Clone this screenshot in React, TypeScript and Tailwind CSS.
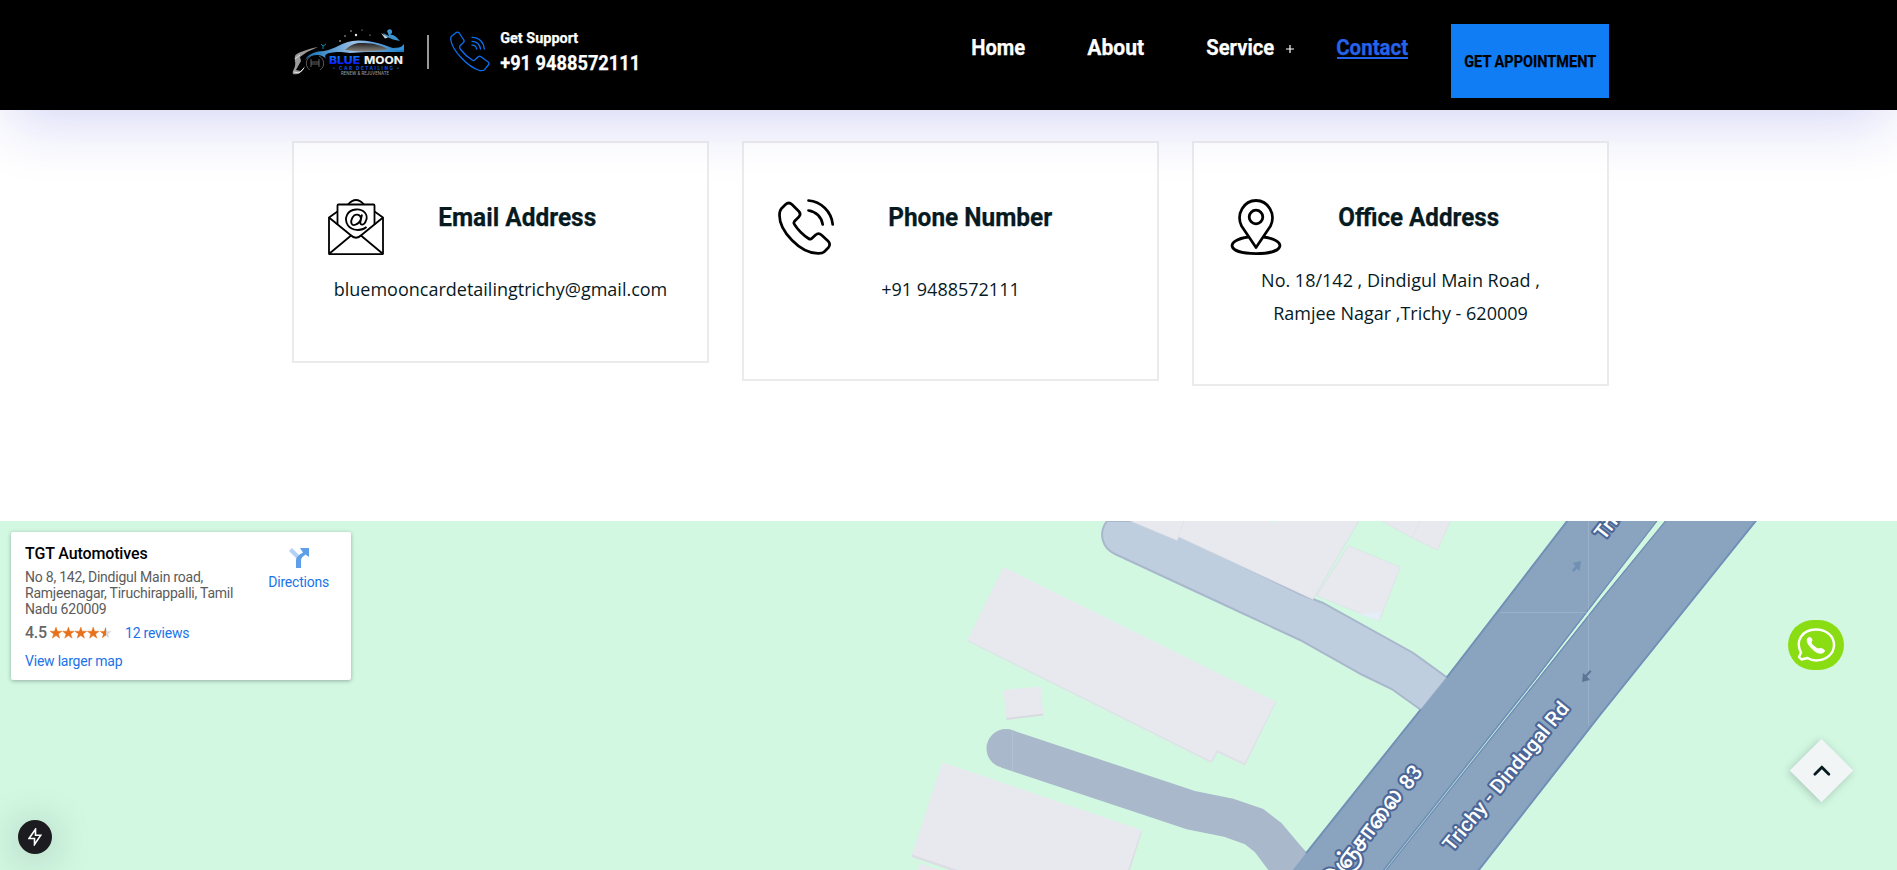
import React from "react";

const rj = "font-['Roboto',sans-serif] font-bold";

function Fit({ w, size, children, className = "" }: { w: number; size: number; children: string; className?: string }) {
  return (
    <svg width={w} height={size * 1.2} className={`block overflow-visible ${className}`} fill="currentColor" stroke="currentColor" strokeWidth=".25">
      <text x="-0.8" y={size * 0.95} fontSize={size} textLength={w + 1} lengthAdjust="spacingAndGlyphs">
        {children}
      </text>
    </svg>
  );
}

function Logo() {
  return (
    <svg width="114" height="50" viewBox="0 0 114 50" className="block">
      <defs>
        <linearGradient id="body" x1="0" x2="1">
          <stop offset="0" stopColor="#0b6fb8" />
          <stop offset="0.5" stopColor="#9cc0e6" />
          <stop offset="1" stopColor="#1679c4" />
        </linearGradient>
        <linearGradient id="glass" x1="0" x2="0" y1="0" y2="1">
          <stop offset="0" stopColor="#222" />
          <stop offset="1" stopColor="#8a8580" />
        </linearGradient>
        <linearGradient id="word" x1="0" x2="0" y1="0" y2="1">
          <stop offset="0" stopColor="#1593ff" />
          <stop offset="1" stopColor="#0900ff" />
        </linearGradient>
      </defs>
      <path d="M13 33C16 27 24 24 32 24C45 22 50 14 66 13.500C82 13 94 19 101 21L112 20V25H74L58 26L49 25C36 25 30 27 35 33C30 26 20 27 13 33Z" fill="url(#body)" />
      <path d="M53 23C59 17 65 15.500 72 16C82 16 90 19 96 22C85 25 65 25 53 23Z" fill="url(#glass)" />
      <path d="M112 17V23H97C104 22 109 21 112 17Z" fill="#3691d8" />
      <path d="M91 6L97 9L95 4C97 1 101 2 100 6L98 8C102 7 105 11 108 14L101 12.500L93 9Z" fill="#3b94cf" />
      <path d="M89 6L96 10.500L93 11.500Z" fill="#c9d6dc" />
      <path d="M26 20C16 22 4 26 3 29C2 33 4 35 3 39C2 43 0 44 1 47C5 48 11 46 13 39L9 44L4 43L9 34L8 30L15 25Z" fill="#9a9a9a" />
      <path d="M3 32L8 28M2 45L7 46L12 41" stroke="#e4e4e4" fill="none" />
      <g fill="none" stroke="#555">
        <path d="M19 29C13 32 13 40 18 43M27 29C33 32 33 40 28 43" />
        <path d="M19 32V40M27 32V40M19 35H27M19 37H27" stroke="#777" strokeWidth=".8" />
      </g>
      <path d="M29 17L31 19L34 17M31 19V22" stroke="#1583b3" fill="none" />
      <g fill="#e8e8e8">
        <circle cx="48" cy="14" r=".8" /><circle cx="53" cy="9" r=".7" /><circle cx="59" cy="4" r=".7" />
        <circle cx="64" cy="8" r="1.200" /><circle cx="70" cy="3" r=".5" /><circle cx="78" cy="8" r=".6" />
      </g>
      <g fontFamily="Inter, sans-serif" fontWeight="800">
        <text x="37" y="36.500" fontSize="10.500" textLength="31" lengthAdjust="spacingAndGlyphs" fill="url(#word)">BLUE</text>
        <text x="72" y="36.500" fontSize="10.500" textLength="39" lengthAdjust="spacingAndGlyphs" fill="#eee">MOON</text>
        <text x="41" y="42.500" fontSize="4.600" textLength="66" fill="#0a48cc">• CAR DETAILING •</text>
        <text x="49" y="48" fontSize="4.200" fontWeight="500" textLength="48" fill="#999">RENEW &amp; REJUVENATE</text>
      </g>
    </svg>
  );
}

function HeaderPhone() {
  return (
    <svg width="40" height="41" viewBox="0 0 40 41" fill="none" stroke="#0d6ff0" strokeWidth="1.300" strokeLinecap="round" strokeLinejoin="round">
      <path d="M1.500 5.200L5.500 2Q7.700 .2 9.200 2L13.500 8.500Q15 10.500 13 12L10.200 14.500Q9.200 16 10.200 18Q15.500 25 22.500 29.200Q24.300 30 25.300 28.500L28.200 25.700Q29.500 24.600 31 25.700L38.200 31Q39.700 32.200 38.300 34L34.500 38.700Q32.500 40.200 29.500 39.500C18 36 2.500 20 .8 9Q.5 6.500 1.500 5.200Z" />
      <path d="M22 6.300C29 6.300 33.600 11 34.300 18M22 10.300C26.700 10.300 30 13.600 30.500 18M22 14.200C24.500 14.200 26.200 15.600 26.600 18" />
    </svg>
  );
}

function MailIcon() {
  return (
    <svg width="56" height="56" viewBox="0 0 56 56" fill="none" stroke="#000" strokeWidth="1.800" strokeLinejoin="round">
      <path d="M1 19V54.500Q1 55.200 1.700 55.200H54.300Q55 55.200 55 54.500V19" />
      <path d="M9.500 26V6.500Q9.500 5.500 10.500 5.500H45.500Q46.500 5.500 46.500 6.500V26" />
      <path d="M9.500 12.500L1 18.500L22.500 36Q28 41.500 33.500 36L55 18.500L46.500 12.500M1.500 54.500L22.500 37M54.500 54.500L33.500 37M20 5.500Q28 -3.500 36 5.500" />
      <path d="M38.500 28C33 32.500 24 31.800 20 26.500C15.500 19.500 19 11 28 10.500C36 10 40.500 16 38 21.500C36.500 26.500 31.500 27 32.500 22.500L34 15.500M33 19.500C32.500 15 27 14 24.500 18.500C21.500 24 24 27 27.500 25.700C30.500 24.500 32.500 22 33 19.500" />
    </svg>
  );
}

function PhoneIcon() {
  return (
    <svg width="56" height="56" viewBox="0 0 56 56" fill="none" stroke="#000" strokeWidth="2.700" strokeLinecap="round" strokeLinejoin="round">
      <path d="M3.500 9.500L7.500 5.500Q10.800 2.500 14 5.500L21 12.500Q23.300 15 21 17.700L16.500 22.200Q15.300 23.700 16.500 25.500Q22 34 30.500 39.500Q32.500 40.800 34 39.300L37.500 36Q40.500 33.300 43.500 36L50 42Q53 45 50.500 48.500L46 53Q44.500 54.500 40 54.400C22 54.400 1.500 32 1.500 16.500Q1.500 11.500 3.500 9.500Z" />
      <path d="M30.500 1.500C43 2.500 53.500 12.500 54.700 25.500M30.500 11.500C38 12.500 43.500 18 44.700 25.500" />
    </svg>
  );
}

function PinIcon() {
  return (
    <svg width="56" height="56" viewBox="0 0 56 56" fill="none" stroke="#000" strokeWidth="2.800" strokeLinejoin="round">
      <path d="M28 48.500L13 27C7 15 15.500 1.500 28 1.500S49 15 43 27Z" transform="translate(1 0) scale(.965 1)" />
      <circle cx="28" cy="18" r="6.800" />
      <path d="M20.500 38C-2.500 41 -2.500 54.600 28 54.600S58.500 41 35.500 38" />
    </svg>
  );
}

function MapCanvas() {
  const wall = "#e8e9ee";
  return (
    <svg viewBox="0 521 1897 349" className="block h-[349px] w-full" preserveAspectRatio="xMinYMin slice">
      <rect y="521" width="1897" height="349" fill="#d2f8e2" />
      <path d="M1107 521C1098 533 1102 548 1115 554L1243 613.500L1300 640L1361.700 674.500L1391.700 689L1421 710L1447 677.500L1413.300 653L1323 603L1300 594L1150 521Z" fill="#bfcedf" stroke="#a8b7cb" strokeWidth="2" />
      <g fill={wall} stroke="#dcdde4" strokeWidth=".6">
        <path d="M1128 520L1177 540.500L1179 537L1313 599.500L1359.300 520Z" stroke="#d5d9e2" />
        <path d="M1348.300 545.700L1400.300 567.300L1379.300 621L1316.700 595.700Z" />
        <path d="M1380 520L1411.700 537.700L1437.300 550L1451 520Z" />
      </g>
      <path d="M1358 614L1381 612L1379 620.500Z" fill="#e4eef8" />
      <path d="M1420.500 520L1412 537.500M1184 521L1178 537" stroke="#dfe0e6" strokeWidth=".8" />
      <path d="M1343 555L1316 596" stroke="#dfe0e6" strokeWidth=".8" />
      <path d="M1270 521H1278L1275 523Z" fill="#d2f8e2" />
      <path d="M968.300 641.500L1211.700 763L1217.500 752.500L1245 765.500L1275.700 703V701L967.500 639Z" fill="#dfe0e8" />
      <path d="M1003.500 567L1275.700 701.500L1244.500 763L1217 750L1211 761L967.500 640Z" fill={wall} />
      <path d="M1006.700 720L1043.500 715.500L1043 713H1006Z" fill="#d9dae1" />
      <path d="M1003.300 690L1040.700 686.500L1043.300 713.500L1006.500 718Z" fill={wall} />
      <path d="M912 857L950 870H965L912 853ZM1141.500 830V833L1130 870H1127Z" fill="#dcdde5" />
      <path d="M942.300 762.300L1141.300 830L1128 870H958L912 854.500Z" fill={wall} />
      <path d="M920 863L940 870H918Z" fill={wall} />
      <circle cx="1006" cy="748.500" r="19.500" fill="#a9b8ca" />
      <path d="M1012 730.200L1195 791L1233.300 798.700L1263.300 809L1281.700 823.300L1300 845L1310 856V870H1268.300L1255 852.300L1245 844.300L1224 836.700L1186.700 829.300L1001 767.500Z" fill="#a9b8ca" />
      <path d="M1568 520L1446.700 677.500L1420.700 709.500L1306 853.300L1292 871H1478L1600 715L1756 520Z" fill="#8aa3bf" />
      <path d="M1568 520L1446.700 677.500M1420.700 709.500L1306 853.300M1478 871L1600 715L1756.500 520" fill="none" stroke="#7090b6" strokeWidth="2" />
      <path d="M1658 520L1600 595L1533 682L1383 871H1385L1535 683L1600 601L1666 520Z" fill="#d2f8e2" stroke="#7090b6" strokeWidth="1.800" />
      <path d="M1658.500 520L1600 596L1534 682L1384 871H1384.500L1535 682L1600 600L1665.500 520Z" fill="#d2f8e2" />
      <path d="M1500 612.500H1590M1588.500 521V725M1012.500 521V870M1875.500 521V870" stroke="#dce9ec" strokeOpacity=".2" />
      <path d="M1581 561L1579.500 571L1577 568.500L1573.500 572L1572 570L1575.500 566L1572.500 563Z" fill="#6f90b3" />
      <path d="M1582 682L1583 673L1585.500 675L1590 670L1591.500 671.500L1587 676.500L1590 680Z" fill="#5b7697" />
      <g fontFamily="Roboto, 'Noto Sans', sans-serif" fontWeight="500" fontSize="20" fill="#fff" stroke="#4c6797" strokeWidth="4.200" strokeLinejoin="round" paintOrder="stroke">
        <text transform="translate(1452 852.500) rotate(-50.600)" textLength="186" lengthAdjust="spacingAndGlyphs">Trichy - Dindugal Rd</text>
        <text transform="translate(1404 795) rotate(-53)" textAnchor="end" fontSize="25" fontWeight="700">நெடுஞ்சாலை</text>
        <text transform="translate(1409 791) rotate(-52)" fontSize="21">83</text>
        <text transform="translate(1604 541) rotate(-52)">Trichy</text>
      </g>
    </svg>
  );
}

function Stars() {
  const star = "M6 0L7.500 4.200H12L8.400 6.900L9.700 11.200L6 8.600L2.300 11.200L3.600 6.900L0 4.200H4.500Z";
  return (
    <svg width="62" height="12" viewBox="0 0 62 12" className="ml-[3px] block">
      <defs>
        <linearGradient id="half"><stop offset=".5" stopColor="#e7711b" /><stop offset=".5" stopColor="#d6d6d6" /></linearGradient>
      </defs>
      {[0, 1, 2, 3, 4].map((i) => (
        <path key={i} d={star} transform={`translate(${i * 12.4} 0)`} fill={i === 4 ? "url(#half)" : "#e7711b"} stroke={i === 4 ? "none" : "#e7711b"} strokeWidth=".4" />
      ))}
    </svg>
  );
}

function Card({ icon, title, tw, h, children }: { icon: React.ReactNode; title: string; tw: number; h: string; children: React.ReactNode }) {
  return (
    <div className={`w-[417px] border-2 border-black/[0.08] bg-white/50 pl-[34px] pt-14 ${h}`}>
      <div className="flex">
        {icon}
        <h3 className={`ml-[55px] mt-[3px] text-[#061a1f] ${rj}`}><Fit w={tw} size={25}>{title}</Fit></h3>
      </div>
      <div className="-ml-[34px] text-center font-['Open_Sans',sans-serif] text-[18px] leading-[33px] text-[#061a1f]">{children}</div>
    </div>
  );
}

export default function App() {
  return (
    <div className="relative h-[870px] w-full overflow-hidden bg-white">
      <header className={`flex h-[110px] bg-black pl-[292px] text-white shadow-[0_22px_60px_-8px_rgba(30,35,207,0.18)] ${rj}`}>
        <div className="mt-[27px]"><Logo /></div>
        <div className="ml-[21px] mt-[35px] h-[34px] w-0.5 bg-[#999]" />
        <div className="ml-[21px] mt-[31px]"><HeaderPhone /></div>
        <div className="ml-[11px] w-[140px] pt-[28px]">
          <Fit w={77} size={15.5}>Get Support</Fit>
          <div className="mt-[4px]"><Fit w={139} size={20.5}>+91 9488572111</Fit></div>
        </div>
        <nav className="ml-[331px] flex pt-[35px]">
          <Fit w={53} size={21.5}>Home</Fit>
          <Fit w={56} size={21.5} className="ml-[63px]">About</Fit>
          <Fit w={67} size={21.5} className="ml-[63px]">Service</Fit>
          <svg width="8" height="8" viewBox="0 0 8 8" className="ml-[12px] mt-[10px]" stroke="#fff" strokeWidth="1.200"><path d="M4 0V8M0 4H8" /></svg>
          <div className="ml-[43px] h-[24px] w-[71px] border-b-2 border-[#2563eb] text-[#2563eb]"><Fit w={71} size={21.5}>Contact</Fit></div>
        </nav>
        <button className="ml-[43px] mt-6 flex h-[74px] w-[158px] items-center justify-center bg-[#117df5] pt-0.5 text-black">
          <Fit w={131} size={16}>GET APPOINTMENT</Fit>
        </button>
      </header>

      <main className="flex h-[411px] items-start gap-[33px] pl-[292px] pt-[31px]">
        <Card icon={<MailIcon />} title="Email Address" tw={157} h="h-[222px]"><p className="pt-[18px]">bluemooncardetailingtrichy@gmail.com</p></Card>
        <Card icon={<PhoneIcon />} title="Phone Number" tw={163} h="h-[240px]"><p className="pt-[18px]">+91 9488572111</p></Card>
        <Card icon={<PinIcon />} title="Office Address" tw={160} h="h-[245px]"><p className="pt-[9px]">No. 18/142 , Dindigul Main Road ,<br />Ramjee Nagar ,Trichy - 620009</p></Card>
      </main>

      <section className="relative h-[349px]">
        <MapCanvas />
        <div className="absolute left-[11px] top-[11px] flex h-[148px] w-[340px] justify-between rounded-[2px] bg-white pl-[14px] pr-[22px] font-['Roboto',sans-serif] text-[14px] tracking-[-0.22px] shadow-[0_1px_4px_rgba(0,0,0,0.3)]">
          <div className="w-[212px]">
            <div className="mt-[12px] text-[16px] font-medium leading-5 tracking-[-0.13px] text-black">TGT Automotives</div>
            <div className="mt-[5px] whitespace-nowrap leading-4 text-[#5b5b5b]">No 8, 142, Dindigul Main road,<br />Ramjeenagar, Tiruchirappalli, Tamil<br />Nadu 620009</div>
            <div className="mt-[6px] flex h-5 items-center leading-5">
              <span className="text-[16px] font-medium text-[#666]">4.5</span><Stars /><span className="ml-[13px] text-[#1a73e8]">12 reviews</span>
            </div>
            <div className="mt-2 leading-5 text-[#1a73e8]">View larger map</div>
          </div>
          <div className="flex flex-col items-center pt-4 text-[#1a73e8]">
            <svg width="20" height="20" viewBox="0 0 20 20">
              <path d="M0 3L3 0L10 7L8 11Z" fill="#b4d0f5" />
              <path d="M7 20V13C7 9.500 9 7.500 14 4.500L11 0H20V9L16.500 6.500C13 9 12 10 12 14V20Z" fill="#5f9ee8" />
            </svg>
            <span className="mt-1 leading-5">Directions</span>
          </div>
        </div>
      </section>

      <div className="absolute left-[18px] top-[820px] flex h-[34px] w-[34px] items-center justify-center rounded-full bg-[#1c1b1f] shadow-[0_4px_40px_rgba(0,0,0,0.25)]">
        <svg width="14" height="18" viewBox="0 0 14 18" fill="none" stroke="#fff" strokeWidth="1.600" strokeLinejoin="miter"><path d="M7.500 1.200L1 10.500H6.500V16.500L12.800 7.200H7.500Z" /></svg>
      </div>

      <div className="absolute left-[1788px] top-[620px] flex h-[50px] w-14 items-center justify-center rounded-[25px] bg-[#8add13]">
        <svg width="40" height="34" viewBox="0 0 40 34" fill="none" stroke="#fff" strokeWidth="2.400" strokeLinejoin="round">
          <path d="M5 24.500C-1 13 6 1.500 20 1.500C30.500 1.500 38 8 38 17S30 32.500 20 32.500C17 32.500 14 31.500 11.500 30L5.500 31.500L3 29Z" />
          <path d="M12 10C15 9 15.500 10 16 12.500C14.500 15 15 16 19 19C21.500 21.500 23.500 20.500 25.500 20.500C29 22 29 22.500 28 24C24 27 19 24 15.500 20C12 16.500 10 12.500 12 10Z" fill="#fff" stroke="#fff" strokeWidth="1" />
        </svg>
      </div>

      <div className="absolute left-[1799px] top-[748px] flex h-[45px] w-[45px] rotate-45 items-center justify-center bg-[#f1f5f6] shadow-[0_2px_8px_rgba(0,0,0,0.2)]">
        <svg width="18" height="11" viewBox="0 0 18 11" className="-rotate-45" fill="none" stroke="#061a1f" strokeWidth="2.800" strokeLinecap="round"><path d="M2 9L9 2L16 9" /></svg>
      </div>
    </div>
  );
}
